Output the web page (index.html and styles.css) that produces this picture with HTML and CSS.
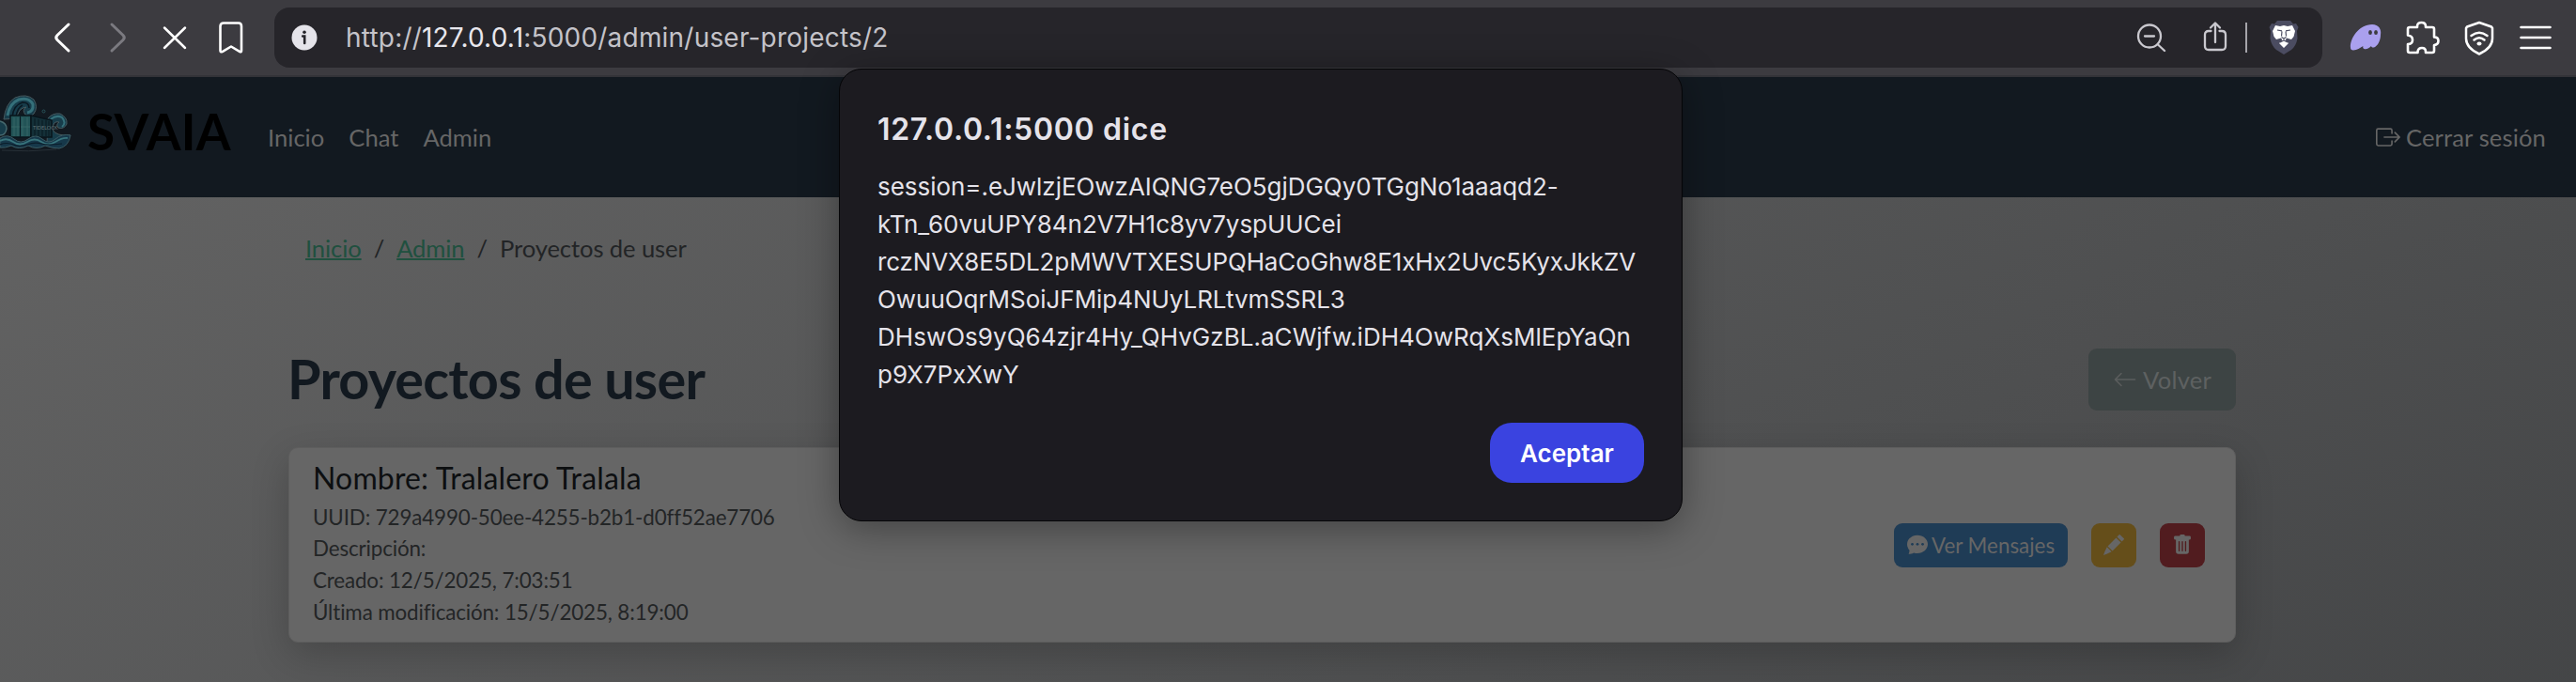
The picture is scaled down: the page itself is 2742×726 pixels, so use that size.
FILE: index.html
```html
<!DOCTYPE html>
<html lang="es">
<head>
<meta charset="utf-8">
<title>Proyectos de user</title>
<link rel="stylesheet" href="styles.css">
</head>
<body>
<div class="toolbar">
  <div class="nav-icons">
    <svg class="ico" width="34" height="40" viewBox="0 0 34 40"><path d="M24 6 12 17.500Q9.500 20 12 22.500L24 34" stroke="#fff" stroke-width="3"/></svg>
    <svg class="ico" width="34" height="40" viewBox="0 0 34 40"><path d="M10 6 22 17.500Q24.500 20 22 22.500L10 34" stroke="#7b7a80" stroke-width="3"/></svg>
    <svg class="ico" width="34" height="40" viewBox="0 0 34 40"><path d="M6 9.500 28 31M28 9.500 6 31" stroke="#fff" stroke-width="2.500"/></svg>
    <svg class="ico" width="34" height="40" viewBox="0 0 34 40"><path d="M9 4.500H25Q28 4.500 28 8V34Q28 36 26 34.800L17 29.500 8 34.800Q5.500 36 5.500 34V8Q5.500 4.500 9 4.500Z" stroke="#fff" stroke-width="2.600"/></svg>
  </div>
  <div class="address">
    <svg class="info" width="28" height="28" viewBox="0 0 28 28"><circle cx="14" cy="14" r="13.500" fill="#e5e4ea"/><circle cx="14" cy="8.300" r="1.800" fill="#26252a"/><path d="M12.200 12.500H14.200V20" fill="none" stroke="#26252a" stroke-width="2.600" stroke-linecap="round"/></svg>
    <div class="url">http://<span class="host">127.0.0.1</span>:5000/admin/user-projects/2</div>
    <div class="tools">
      <svg class="ico" width="34" height="40" viewBox="0 0 34 40"><circle cx="15" cy="18.500" r="12" stroke="#c9c8ce" stroke-width="2.300"/><path d="M10 18.500H20M24 27.500 31 34" stroke="#c9c8ce" stroke-width="2.300"/></svg>
      <svg class="ico share" width="28" height="40" viewBox="0 0 28 40"><path d="M9.500 13H7Q3 13 3 17V29Q3 33 7 33H21Q25 33 25 29V17Q25 13 21 13H18.500M14 25V5M9 9.500 14 4.500 19 9.500" stroke="#c9c8ce" stroke-width="2.300"/></svg>
      <span class="sep"></span>
      <svg class="lion" width="32" height="38" viewBox="0 0 32 38"><path d="M9 1H23L26 4.500 29 4 31.500 8 30 12 30.500 20Q29 28 24 32L16 37 8 32Q3 28 1.500 20L2 12 .5 8 3 4 6 4.500Z" fill="#4b4c61"/><path d="M7 6 12 7 16 6 20 7 25 6 28 12 26.500 18 24 21 19 19.500 17.500 22 21 25 16 30 11 25 14.500 22 13 19.500 8 21 5.500 18 4 12Z" fill="#fff"/><path d="M9 11 14 11.800M23 11 18 11.800M14 12.500 13.500 17.500M18 12.500 18.500 17.500M13.500 18.500 16 20 18.500 18.500M16 20V22M12 24 16 22 20 24" fill="none" stroke="#4b4c61" stroke-width="1.200"/></svg>
    </div>
  </div>
  <div class="ext">
    <svg width="34" height="30" viewBox="0 0 34 30"><path d="M1 26C0 16 10 1 24 1 31 1 34 6 33 12 33 18 30 24 26 25.500 24 26 23 24.500 23 24 21 26 18 28 15.500 27 14 26.500 14 25 14.500 24 11 26 8 28.500 4 28.500 2 28.500 1 27.500 1 26Z" fill="#aaa0ee"/><ellipse cx="22" cy="9.500" rx="1.900" ry="2.500" fill="#3c3b40"/><ellipse cx="28" cy="9.500" rx="1.900" ry="2.500" fill="#3c3b40"/></svg>
    <svg class="ico" width="36" height="36" viewBox="0 0 36 36"><path d="M4 7H12V6Q12 2 16.500 2T21 6V7H28Q30 7 30 9V17.500Q34.500 17.500 34.500 21.500T30 26V32Q30 34 28 34H21V33Q21 29 17 29T12.500 33V34H4Q2 34 2 32V25Q7 25 7 20.500T2 15.500V9Q2 7 4 7Z" stroke="#fff" stroke-width="2.600"/></svg>
    <svg class="ico" width="32" height="37" viewBox="0 0 32 37"><path d="M16 2 29 6.500 30 8V19Q30 29 16 35.500 2 29 2 19V8L3 6.500ZM7.500 16Q16 9.500 24.500 16M10.500 20.500Q16 16 21.500 20.500" stroke="#fff" stroke-width="2.500"/><ellipse cx="16" cy="24.500" rx="2.500" ry="1.900" fill="#fff"/></svg>
    <svg class="ico" width="36" height="28" viewBox="0 0 36 28"><path d="M2.500 3H33.500M2.500 14H33.500M2.500 25H33.500" stroke="#fff" stroke-width="2.600"/></svg>
  </div>
</div>

<header class="navbar">
  <svg class="logo" width="77" height="62" viewBox="0 0 77 62" fill="none">
    <path d="M4 27Q6 10 16 4 28-1 36 6 41 14 36 21 32 25 27 22 23 17 28 14 19 15 18 26Z" fill="#173c4a" stroke="#46595e" stroke-width="1"/>
    <path d="M8 23Q10 10 20 6 31 3 35 11 36 19 29 20" stroke="#35707a" stroke-width="3"/>
    <path d="M13 25Q14 12 24 9 31 9 31 15M17 25Q18 15 24 12" stroke="#0a1822" stroke-width="1.500"/>
    <path d="M0 29Q7 31 7 37 6 44 0 44" fill="#173c4a" stroke="#46696f" stroke-width="1.500"/>
    <path d="M51 26Q56 20 64 21 72 25 71 32 68 38 62 36 59 33 63 30 56 28 56 38 59 45 75 44L68 54H50Z" fill="#173c4a" stroke="#46595e" stroke-width="1"/>
    <path d="M54 27Q60 22 66 25 71 31 66 35" stroke="#35707a" stroke-width="2"/>
    <path d="M11 23H33V46H11Z" fill="#225457" stroke="#08141b" stroke-width="1.500"/>
    <path d="M33 23 55 28V46H33Z" fill="#143038" stroke="#08141b" stroke-width="1.500"/>
    <path d="M15 25V45M19 25V45M24 25V45M29 25V45M12 35H32" stroke="#3a6b69" stroke-width=".8"/>
    <path d="M21.500 24V46M37 26V45M41 27V45M45 28V45M49 28V45M52 29V45" stroke="#081821"/>
    <text class="crate" x="35" y="38">TIDELOCK</text>
    <path d="M0 47Q8 42 15 48T30 48 45 48 59 48 75 44Q73 56 63 58 56 58 48 55 39 60 30 55 20 60 12 55 5 58 0 57Z" fill="#16384a" stroke="#3a5a62" stroke-width="1"/>
    <path d="M0 50Q7 46 14 51T29 51 44 51 59 51 72 47" stroke="#38747c" stroke-width="1.800"/>
    <path d="M0 54Q7 51 14 54T29 54 44 53 66 53" stroke="#0b1d2a" stroke-width="1.200"/>
    <path d="M2 60Q30 62 60 59" stroke="#273037"/>
    <circle cx="46.500" cy="18.500" r="1.500" stroke="#28545b"/>
  </svg>
  <div class="brand">SVAIA</div>
  <nav class="links"><a>Inicio</a><a>Chat</a><a>Admin</a></nav>
  <a class="logout"><svg width="26" height="26" viewBox="0 0 16 16" fill="#666"><path fill-rule="evenodd" d="M10 12.500a.5.5 0 0 1-.5.5h-8a.5.5 0 0 1-.5-.5v-9a.5.5 0 0 1 .5-.5h8a.5.5 0 0 1 .5.5v2a.5.5 0 0 0 1 0v-2A1.500 1.500 0 0 0 9.500 2h-8A1.500 1.500 0 0 0 0 3.500v9A1.500 1.500 0 0 0 1.500 14h8a1.500 1.500 0 0 0 1.500-1.500v-2a.5.5 0 0 0-1 0z"/><path fill-rule="evenodd" d="M15.854 8.354a.5.5 0 0 0 0-.708l-3-3a.5.5 0 0 0-.708.708L14.293 7.500H5.500a.5.5 0 0 0 0 1h8.793l-2.147 2.146a.5.5 0 0 0 .708.708z"/></svg>Cerrar sesión</a>
</header>

<main class="page">
  <div class="crumbs"><a>Inicio</a><span>/</span><a>Admin</a><span>/</span><b>Proyectos de user</b></div>
  <div class="heading">
    <h1>Proyectos de user</h1>
    <a class="back"><svg width="26" height="26" viewBox="0 0 16 16" fill="#5a5d5d"><path fill-rule="evenodd" d="M15 8a.5.5 0 0 0-.5-.5H2.707l3.147-3.146a.5.5 0 1 0-.708-.708l-4 4a.5.5 0 0 0 0 .708l4 4a.5.5 0 0 0 .708-.708L2.707 8.500H14.500A.5.5 0 0 0 15 8"/></svg>Volver</a>
  </div>
  <section class="card">
    <div class="details">
      <h2>Nombre: Tralalero Tralala</h2>
      <p>UUID: 729a4990-50ee-4255-b2b1-d0ff52ae7706</p>
      <p>Descripción:</p>
      <p>Creado: 12/5/2025, 7:03:51</p>
      <p>Última modificación: 15/5/2025, 8:19:00</p>
    </div>
    <div class="actions">
      <a class="btn blue"><svg width="22" height="22" viewBox="0 0 16 16"><path d="M8 .5C3.600.5 0 3.600 0 7.400c0 1.900.8 3.500 1.800 4.700.1 1-.3 2.400-.6 3.100.8 0 2.700-.3 4-1.100A9 9 0 0 0 8 14.500c4.400 0 8-3.200 8-7.100S12.400.5 8 .5Z" fill="#666"/><circle cx="4" cy="7.500" r="1" fill="#1f3c56"/><circle cx="8" cy="7.500" r="1" fill="#1f3c56"/><circle cx="12" cy="7.500" r="1" fill="#1f3c56"/></svg>Ver Mensajes</a>
      <a class="btn yellow"><svg width="22" height="22" viewBox="0 0 16 16" fill="#666"><path d="M12.854.146a.5.5 0 0 0-.707 0L10.500 1.793 14.207 5.500l1.647-1.646a.5.5 0 0 0 0-.708zm.646 6.061L9.793 2.500 3.293 9l3.707 3.707zM2.700 9.700.9 13.500 0 16l2.500-.9 3.800-1.800z"/></svg></a>
      <a class="btn red"><svg width="22" height="22" viewBox="0 0 16 16" fill="#666"><path d="M2.500 1a1 1 0 0 0-1 1v1a1 1 0 0 0 1 1H3v9a2 2 0 0 0 2 2h6a2 2 0 0 0 2-2V4h.5a1 1 0 0 0 1-1V2a1 1 0 0 0-1-1H10a1 1 0 0 0-1-1H7a1 1 0 0 0-1 1zm3 4a.5.5 0 0 1 .5.5v7a.5.5 0 0 1-1 0v-7a.5.5 0 0 1 .5-.5M8 5a.5.5 0 0 1 .5.5v7a.5.5 0 0 1-1 0v-7A.5.5 0 0 1 8 5m3 .5v7a.5.5 0 0 1-1 0v-7a.5.5 0 0 1 1 0"/></svg></a>
    </div>
  </section>
</main>

<div class="dialog">
  <h3>127.0.0.1:5000 dice</h3>
  <div class="message">
    <div>session=.eJwlzjEOwzAIQNG7eO5gjDGQy0TGgNo1aaaqd2-</div>
    <div>kTn_60vuUPY84n2V7H1c8yv7yspUUCei</div>
    <div class="tight">rczNVX8E5DL2pMWVTXESUPQHaCoGhw8E1xHx2Uvc5KyxJkkZV</div>
    <div>OwuuOqrMSoiJFMip4NUyLRLtvmSSRL3</div>
    <div class="wide">DHswOs9yQ64zjr4Hy_QHvGzBL.aCWjfw.iDH4OwRqXsMlEpYaQn</div>
    <div>p9X7PxXwY</div>
  </div>
  <button class="ok">Aceptar</button>
</div>
</body>
</html>
```
FILE: styles.css
```css
* { box-sizing: border-box; }
body { margin: 0; width: 2742px; height: 726px; overflow: hidden; display: flex; flex-direction: column; position: relative; background: #555; font-family: Lato, sans-serif; font-size: 25.6px; color: #666; }
svg { flex: none; display: block; }
h1, h2, h3, p { margin: 0; }
.ico { fill: none; stroke-linecap: round; stroke-linejoin: round; }

.toolbar { flex: none; height: 82px; background: #3c3b40; border-bottom: 2px solid #333338; display: flex; align-items: center; }
.nav-icons { width: 292px; display: flex; gap: 26px; padding-left: 49px; }
.address { width: 2180px; height: 64px; border-radius: 16px; background: #26252a; display: flex; align-items: center; padding: 0 25px 0 18px; }
.url { margin-left: 30px; font: 28px/40px Inter, sans-serif; letter-spacing: .2px; color: #c4c3c9; white-space: nowrap; }
.host { color: #e8e7ed; }
.tools { margin-left: auto; display: flex; align-items: center; }
.share { margin-left: 37px; }
.sep { width: 2px; height: 32px; background: #a5a4aa; margin: 0 23px 0 18px; }
.ext { display: flex; align-items: center; padding-left: 29px; gap: 26px; }

.navbar { flex: none; height: 128px; background: #121920; display: flex; align-items: center; padding-right: 32px; }
.logo { margin-top: -30px; }
.crate { font: 5.5px Lato, sans-serif; fill: #637477; }
.brand { margin: -13px 0 0 16px; width: 192px; font: 700 53px/60px Lato, sans-serif; letter-spacing: .3px; color: #000; }
.links { display: flex; gap: 26px; }
.logout { margin-left: auto; display: flex; align-items: center; gap: 6px; letter-spacing: .12px; }

.page { flex: 1; padding: 34px 362px 0 307px; background: linear-gradient(to bottom right, #646464, #383a3c) 0 -128px / 2742px 1500px no-repeat; }
.crumbs { display: flex; gap: 13px; padding-left: 18px; line-height: 40px; letter-spacing: -.1px; color: #222426; }
.crumbs a { color: #20503f; text-decoration: underline; text-decoration-thickness: 2px; }
.crumbs b { font-weight: 400; }
.heading { margin-top: 87px; height: 66px; display: flex; justify-content: space-between; align-items: center; }
h1 { margin: -2px 0 0 -1px; font-size: 57.6px; line-height: 70px; letter-spacing: -.75px; color: #121920; }
.back { width: 157px; height: 66px; border-radius: 9px; background: #3d4444; color: #5e6161; display: flex; align-items: center; justify-content: center; gap: 6px; letter-spacing: .2px; }
.card { margin-top: 39px; height: 208px; border: 1px solid #5e5e5e; border-radius: 10px; background: #666; box-shadow: 0 13px 40px rgba(0, 0, 0, .2); display: flex; justify-content: space-between; align-items: center; padding: 0 32px 0 25px; }
h2 { margin: -2px 0 6px; font-size: 32px; font-weight: 400; line-height: 38px; letter-spacing: .15px; color: #0d0f11; }
.details p { font-size: 22.4px; line-height: 33.6px; letter-spacing: -.14px; color: #232526; }
.actions { display: flex; gap: 25px; }
.btn { width: 48px; height: 47px; border-radius: 9px; display: flex; align-items: center; justify-content: center; gap: 4px; font-size: 22.4px; }
.blue { width: 185px; background: #1f3c56; }
.yellow { background: #654e1a; }
.red { background: #511c1f; }

.dialog { position: absolute; left: 893px; top: 73px; width: 898px; height: 482px; border: 1px solid #050507; border-radius: 24px; background: #1c1b20; box-shadow: 0 8px 40px rgba(0, 0, 0, .35); padding: 42px 40px 40px; display: flex; flex-direction: column; font-family: Inter, sans-serif; color: #e5e3ea; }
.dialog h3 { font-size: 32px; font-weight: 600; line-height: 44px; letter-spacing: .7px; }
.message { margin-top: 19px; font-size: 26px; line-height: 40px; letter-spacing: -.04px; white-space: nowrap; }
.tight { letter-spacing: -.12px; }
.wide { letter-spacing: .03px; }
.ok { margin-top: auto; align-self: flex-end; width: 164px; height: 64px; border: 0; border-radius: 23px; background: #3a43e0; color: #fff; font: 600 26px Inter, sans-serif; }
```
